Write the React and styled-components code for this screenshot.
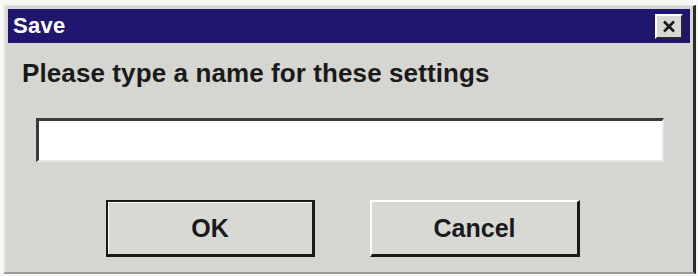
import React from "react"
import styled, { createGlobalStyle } from "styled-components"

const GlobalStyle = createGlobalStyle`
  html, body {
    margin: 0;
    padding: 0;
    background: #f6f6f4;
  }
  * {
    box-sizing: border-box;
  }
`

const Window = styled.div`
  margin: 5px 2px 0 3px;
  width: 693px;
  height: 269px;
  background: #d5d5d1;
  border-top: 1px solid #e4e4e0;
  border-left: 2px solid #ecece8;
  border-right: 3px solid #2a2a2a;
  border-bottom: 2px solid #9a9a96;
  padding: 3px 3px 0 3px;
  display: flex;
  flex-direction: column;
  font-family: "Liberation Sans", Arial, sans-serif;
`

const TitleBar = styled.div`
  height: 34px;
  background: #201670;
  display: flex;
  align-items: center;
  justify-content: space-between;
  padding: 0 7px 0 5px;
`

const Title = styled.div`
  color: #ffffff;
  font-weight: bold;
  font-size: 22px;
  letter-spacing: 0.3px;
`

const CloseButton = styled.div`
  width: 28px;
  height: 25px;
  background: #d8d8d4;
  border-top: 2px solid #ffffff;
  border-left: 2px solid #ffffff;
  border-right: 2px solid #2a2a2a;
  border-bottom: 2px solid #2a2a2a;
  display: flex;
  align-items: center;
  justify-content: center;
`

const Content = styled.div`
  flex: 1;
  display: flex;
  flex-direction: column;
  padding: 15px 0 0 14px;
`

const Label = styled.div`
  font-size: 26px;
  line-height: 30px;
  font-weight: bold;
  color: #1a1a1a;
  letter-spacing: 0.1px;
`

const NameInput = styled.div`
  margin: 30px 0 0 14px;
  width: 628px;
  height: 44px;
  background: #ffffff;
  border-top: 3px solid #3a3a3a;
  border-left: 3px solid #3a3a3a;
  border-right: 2px solid #e8e8e6;
  border-bottom: 2px solid #e8e8e6;
`

const ButtonRow = styled.div`
  display: flex;
  gap: 55px;
  margin: 38px 0 0 84px;
`

const Button = styled.div`
  width: ${p => p.$width}px;
  height: 57px;
  background: #d8d8d4;
  display: flex;
  align-items: center;
  justify-content: center;
  font-size: 25px;
  font-weight: bold;
  color: #1a1a1a;
  border-top: 2px solid ${p => (p.$default ? "#1a1a1a" : "#ffffff")};
  border-left: 2px solid ${p => (p.$default ? "#1a1a1a" : "#ffffff")};
  border-right: 3px solid #1a1a1a;
  border-bottom: 3px solid #1a1a1a;
  box-shadow: ${p => (p.$default ? "inset 1px 1px 0 #ffffff" : "none")};
`

const App = () => (
  <>
    <GlobalStyle />
    <Window>
      <TitleBar>
        <Title>Save</Title>
        <CloseButton>
          <svg width="14" height="13" viewBox="0 0 14 13">
            <path d="M2 1.5 L12 11.5 M12 1.5 L2 11.5" stroke="#1a1a1a" strokeWidth="2.6" />
          </svg>
        </CloseButton>
      </TitleBar>
      <Content>
        <Label>Please type a name for these settings</Label>
        <NameInput />
        <ButtonRow>
          <Button $width={209} $default>OK</Button>
          <Button $width={210}>Cancel</Button>
        </ButtonRow>
      </Content>
    </Window>
  </>
)

export default App
